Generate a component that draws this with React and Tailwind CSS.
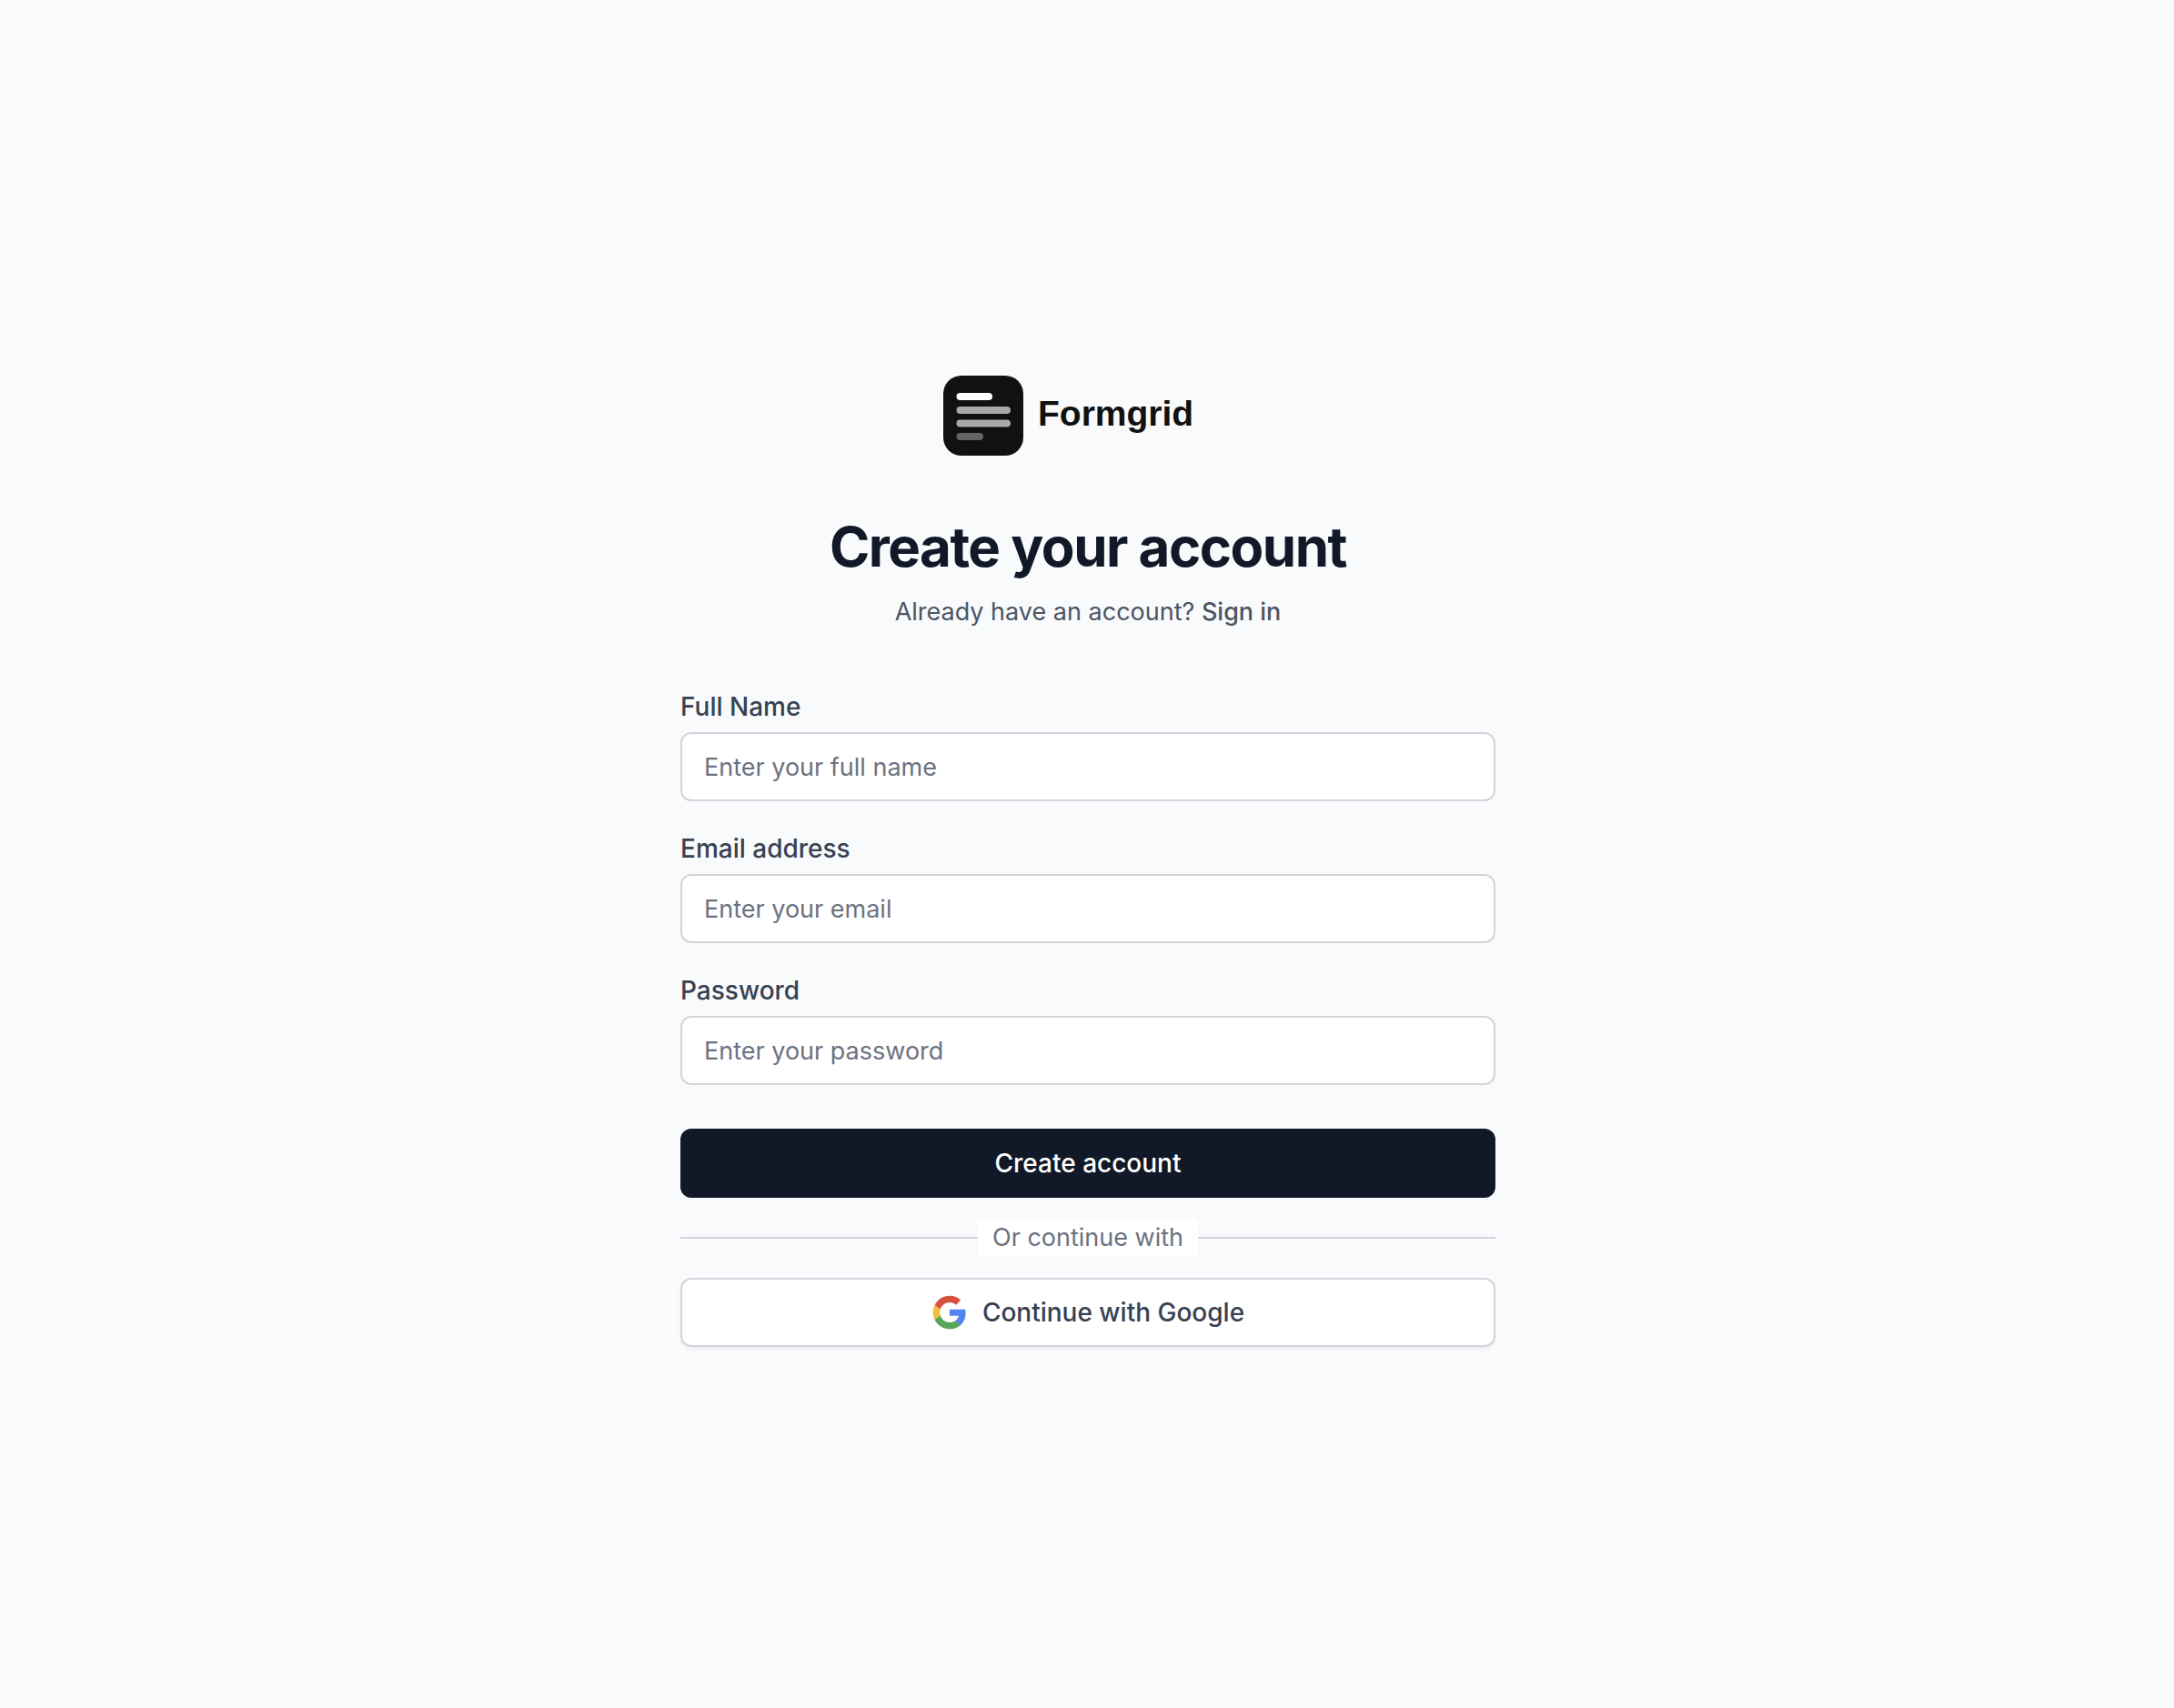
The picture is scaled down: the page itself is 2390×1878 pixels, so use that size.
import { useState } from "react";

const FIELDS = [
  { id: "name", label: "Full Name", type: "text", placeholder: "Enter your full name", autoComplete: "name" },
  { id: "email", label: "Email address", type: "email", placeholder: "Enter your email", autoComplete: "email" },
  { id: "password", label: "Password", type: "password", placeholder: "Enter your password", autoComplete: "new-password" },
];

function Logo() {
  return (
    <div className="mx-auto flex h-[120px] w-[350px] items-start gap-4 p-4">
      <svg className="size-[88px] shrink-0" viewBox="0 0 88 88" fill="none" aria-hidden="true">
        <rect width="88" height="88" rx="20" fill="#111111" />
        <rect x="14.5" y="19" width="39.5" height="8" rx="4" fill="#ffffff" />
        <rect x="14.5" y="34" width="59.5" height="8" rx="4" fill="#a9a9a9" />
        <rect x="14.5" y="48.5" width="59.5" height="8" rx="4" fill="#a9a9a9" />
        <rect x="14.5" y="63" width="29.5" height="8" rx="4" fill="#646464" />
      </svg>
      <span className="pt-4 font-['Liberation_Sans',Arial,sans-serif] text-[39px] leading-[52px] font-bold text-[#111111]">
        Formgrid
      </span>
    </div>
  );
}

function GoogleIcon() {
  return (
    <svg className="size-10" viewBox="0 0 24 24" aria-hidden="true">
      <path
        fill="#5383ec"
        d="M22.56 12.25c0-.78-.07-1.53-.2-2.25H12v4.26h5.92c-.26 1.37-1.04 2.53-2.21 3.31v2.77h3.57c2.08-1.92 3.28-4.74 3.28-8.09z"
      />
      <path
        fill="#58a55c"
        d="M12 23c2.97 0 5.46-.98 7.28-2.66l-3.57-2.77c-.98.66-2.23 1.06-3.71 1.06-2.86 0-5.29-1.93-6.16-4.53H2.18v2.84C3.99 20.53 7.7 23 12 23z"
      />
      <path
        fill="#f1bf42"
        d="M5.84 14.09c-.22-.66-.35-1.36-.35-2.09s.13-1.43.35-2.09V7.07H2.18C1.43 8.55 1 10.22 1 12s.43 3.45 1.18 4.93l2.85-2.22.81-.62z"
      />
      <path
        fill="#d85140"
        d="M12 5.38c1.62 0 3.06.56 4.21 1.64l3.15-3.15C17.45 2.09 14.97 1 12 1 7.7 1 3.99 3.47 2.18 7.07l3.66 2.84c.87-2.6 3.3-4.53 6.16-4.53z"
      />
    </svg>
  );
}

function Field({ id, label, ...props }) {
  return (
    <div>
      <label htmlFor={id} className="block text-[28px] leading-10 font-medium text-[#374151]">
        {label}
      </label>
      <input
        id={id}
        name={id}
        className="mt-2 block h-[76px] w-full rounded-xl border-2 border-[#d1d5db] bg-white px-6 text-[#111827] placeholder:text-[#6b7280] focus:border-[#6b7280] focus:outline-none"
        {...props}
      />
    </div>
  );
}

export default function App() {
  const [values, setValues] = useState({ name: "", email: "", password: "" });

  return (
    <main className="flex min-h-screen items-center justify-center bg-[#f9fafc] py-24 pr-8 pl-[34px] font-[Inter,'Liberation_Sans',sans-serif] text-[27px] leading-10 antialiased">
      <div className="w-full max-w-[896px]">
        <Logo />
        <h1 className="mt-12 text-center text-[60px] leading-[72px] font-bold tracking-tight text-[#111827]">
          Create your account
        </h1>
        <p className="mt-4 text-center text-[#4b5563]">
          Already have an account?{" "}
          <a href="#signin" className="font-medium hover:text-[#111827]">
            Sign in
          </a>
        </p>

        <form className="mt-16" onSubmit={(e) => e.preventDefault()}>
          <div className="flex flex-col gap-8">
            {FIELDS.map((field) => (
              <Field
                key={field.id}
                {...field}
                value={values[field.id]}
                onChange={(e) => setValues({ ...values, [field.id]: e.target.value })}
              />
            ))}
          </div>

          <button
            type="submit"
            className="mt-12 flex h-[76px] w-full items-center justify-center rounded-xl bg-[#111827] text-[28px] font-medium text-white hover:bg-[#1f2937]"
          >
            Create account
          </button>

          <div className="mt-6 flex items-center">
            <span className="h-0.5 flex-1 bg-[#d1d5db]" />
            <span className="bg-white px-4 text-[#6b7280]">Or continue with</span>
            <span className="h-0.5 flex-1 bg-[#d1d5db]" />
          </div>

          <button
            type="button"
            className="mt-6 flex h-[76px] w-full items-center justify-center gap-4 rounded-xl border-2 border-[#d1d5db] bg-white text-[28px] font-medium text-[#374151] shadow-[0_2px_4px_rgba(0,0,0,0.05)] hover:bg-[#f9fafb]"
          >
            <GoogleIcon />
            Continue with Google
          </button>
        </form>
      </div>
    </main>
  );
}
